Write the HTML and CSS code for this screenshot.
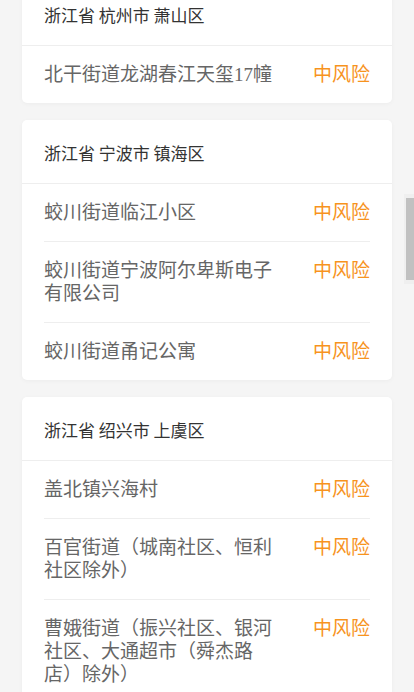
FILE: index.html
```html
<!DOCTYPE html>
<html lang="zh-CN">
<head>
    <meta charset="UTF-8">
    <meta name="viewport" content="width=device-width, initial-scale=1.0">
    <title>中风险地区</title>
    <link rel="stylesheet" href="styles.css">
</head>
<body>

    <div class="list">
        <div class="card">
            <div class="area">浙江省 杭州市 萧山区</div>
            <div class="rows">
                <div class="row">
                    <span class="place">北干街道龙湖春江天玺17幢</span>
                    <span class="risk">中风险</span>
                </div>
            </div>
        </div>

        <div class="card">
            <div class="area">浙江省 宁波市 镇海区</div>
            <div class="rows">
                <div class="row">
                    <span class="place">蛟川街道临江小区</span>
                    <span class="risk">中风险</span>
                </div>
                <div class="row">
                    <span class="place">蛟川街道宁波阿尔卑斯电子有限公司</span>
                    <span class="risk">中风险</span>
                </div>
                <div class="row">
                    <span class="place">蛟川街道甬记公寓</span>
                    <span class="risk">中风险</span>
                </div>
            </div>
        </div>

        <div class="card">
            <div class="area">浙江省 绍兴市 上虞区</div>
            <div class="rows">
                <div class="row">
                    <span class="place">盖北镇兴海村</span>
                    <span class="risk">中风险</span>
                </div>
                <div class="row">
                    <span class="place">百官街道（城南社区、恒利社区除外）</span>
                    <span class="risk">中风险</span>
                </div>
                <div class="row">
                    <span class="place">曹娥街道（振兴社区、银河社区、大通超市（舜杰路店）除外）</span>
                    <span class="risk">中风险</span>
                </div>
            </div>
        </div>
    </div>

    <!-- 滚动条 -->
    <div class="scroll-track"><div class="scroll-thumb"></div></div>

</body>
</html>
```

FILE: styles.css
```css
body {
    margin: 0;
    padding: 0;
    background-color: #f5f5f5;
    font-family: "Noto Sans CJK SC", sans-serif;
    overflow: hidden;
}
.list {
    padding: 0 22px;
    margin-top: -18px;
}
.card {
    background-color: white;
    border-radius: 5px;
    box-shadow: 0 1px 4px rgba(0, 0, 0, 0.04);
    margin-bottom: 17px;
}
.area {
    padding: 21px 22px 19px;
    font-size: 17px;
    line-height: 23px;
    color: #333;
    border-bottom: 1px solid #eeeeee;
}
.rows {
    padding: 0 22px;
}
.row {
    display: flex;
    justify-content: space-between;
    align-items: flex-start;
    padding: 17px 0 17px;
    border-bottom: 1px solid #eeeeee;
    font-size: 19px;
    line-height: 23px;
    font-family: "Liberation Serif", "Noto Sans CJK SC", serif;
}
.row:last-child {
    border-bottom: none;
}
.place {
    width: 230px;
    color: #666;
}
.risk {
    color: #f7931e;
}
.scroll-track {
    position: fixed;
    right: 0;
    top: 194px;
    width: 10px;
    height: 90px;
    background-color: #efefef;
}
.scroll-thumb {
    margin: 4px 0 0 2px;
    width: 8px;
    height: 82px;
    background-color: #c1c1c1;
}
```
